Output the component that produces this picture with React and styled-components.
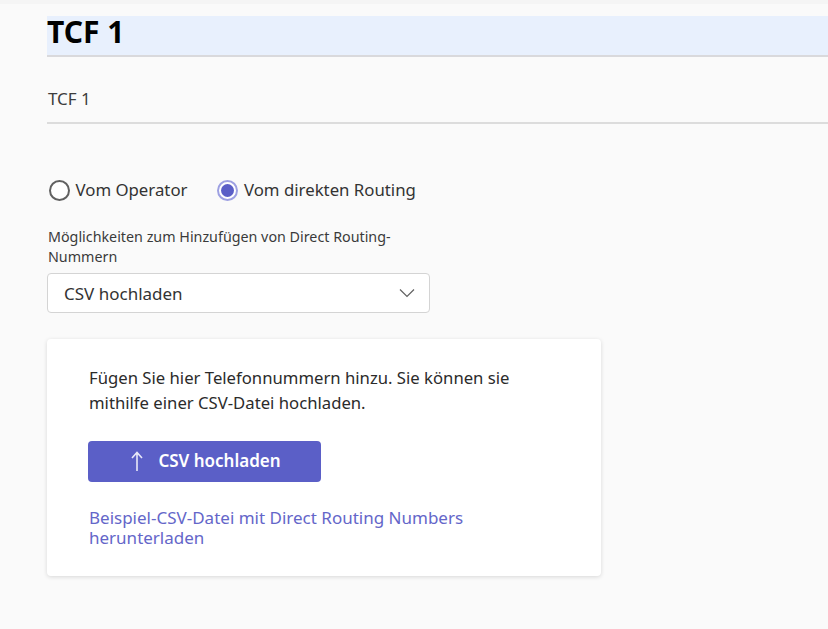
import React from "react";
import styled, { createGlobalStyle } from "styled-components";

const Global = createGlobalStyle`
  html, body { margin: 0; padding: 0; background: #fafafa; }
  body { font-family: "Noto Sans", "Open Sans", sans-serif; color: #242424; }
`;

const Page = styled.div`
  width: 828px;
  height: 629px;
  overflow: hidden;
  box-sizing: border-box;
  border-top: 4px solid #f5f5f5;
  padding: 12px 0 0 47px;
  display: flex;
  flex-direction: column;
`;

const TitleField = styled.div`
  height: 39px;
  background: #e8f0fd;
  border-bottom: 2px solid #d9d9dc;
  display: flex;
  align-items: center;
  flex: none;
`;

const Title = styled.h1`
  margin: 0 0 8px 0;
  font-size: 30px;
  line-height: 32px;
  font-weight: 700;
  color: #000;
`;

const NameField = styled.div`
  height: 67px;
  margin-bottom: 54px;
  border-bottom: 2px solid #dcdcdc;
  box-sizing: border-box;
  padding: 31px 0 0 1px;
  font-size: 17px;
  line-height: 22px;
  color: #3d3d3d;
  flex: none;
`;

const RadioGroup = styled.div`
  display: flex;
  align-items: center;
  gap: 30px;
  margin: 0 0 25px 2px;
  height: 24px;
  flex: none;
`;

const RadioOption = styled.label`
  display: flex;
  align-items: center;
  gap: 5.5px;
  font-size: 16.8px;
  line-height: 24px;
  color: #333;
`;

const RadioMark = styled.span`
  width: 21px;
  height: 21px;
  box-sizing: border-box;
  border-radius: 50%;
  border: 2px solid ${(p) => (p.$checked ? "#9da0e2" : "#616161")};
  display: flex;
  align-items: center;
  justify-content: center;
  background: #fff;
  &::after {
    content: "";
    width: 13px;
    height: 13px;
    border-radius: 50%;
    background: ${(p) => (p.$checked ? "#5b5fc7" : "transparent")};
  }
`;

const FieldLabel = styled.div`
  width: 384px;
  margin-left: 1px;
  font-size: 14.3px;
  line-height: 20px;
  color: #3a3a3a;
`;

const Select = styled.div`
  width: 383px;
  height: 40px;
  margin-top: 6px;
  box-sizing: border-box;
  background: #fff;
  border: 1px solid #d4d4d4;
  border-radius: 4px;
  padding: 0 14px 0 16px;
  display: flex;
  align-items: center;
  justify-content: space-between;
  font-size: 17px;
  color: #333;
  flex: none;
`;

const Card = styled.section`
  width: 554px;
  height: 237px;
  margin-top: 26px;
  box-sizing: border-box;
  background: #fff;
  border-radius: 4px;
  box-shadow: 0 1px 4px rgba(0, 0, 0, 0.14);
  padding: 26px 41px 0;
  display: flex;
  flex-direction: column;
  align-items: flex-start;
  flex: none;
`;

const CardText = styled.p`
  margin: 0 0 26px 1px;
  font-size: 16.7px;
  line-height: 25px;
  color: #2b2b2b;
  white-space: nowrap;
`;

const UploadButton = styled.button`
  width: 233px;
  height: 41px;
  border: none;
  border-radius: 4px;
  background: #5b5fc7;
  color: #fff;
  font: 600 17px "Noto Sans", sans-serif;
  display: flex;
  align-items: center;
  justify-content: center;
  gap: 15px;
  padding: 0 0 2px 3px;
`;

const DownloadLink = styled.a`
  margin: 26px 0 0 1px;
  font-size: 17px;
  line-height: 20px;
  color: #6466c9;
  text-decoration: none;
  white-space: nowrap;
`;

export default function App() {
  return (
    <Page>
      <Global />
      <TitleField>
        <Title>TCF 1</Title>
      </TitleField>
      <NameField>TCF 1</NameField>
      <RadioGroup>
        <RadioOption>
          <RadioMark />
          Vom Operator
        </RadioOption>
        <RadioOption>
          <RadioMark $checked />
          Vom direkten Routing
        </RadioOption>
      </RadioGroup>
      <FieldLabel>
        Möglichkeiten zum Hinzufügen von Direct Routing-
        <br />
        Nummern
      </FieldLabel>
      <Select>
        CSV hochladen
        <svg width="16" height="10" viewBox="0 0 16 10" fill="none">
          <path d="M1 1.5L8 8.5L15 1.5" stroke="#616161" strokeWidth="1.2" />
        </svg>
      </Select>
      <Card>
        <CardText>
          Fügen Sie hier Telefonnummern hinzu. Sie können sie
          <br />
          mithilfe einer CSV-Datei hochladen.
        </CardText>
        <UploadButton>
          <svg width="12" height="20" viewBox="0 0 12 20" fill="none">
            <path d="M6 20V1.5M1 7L6 1.5L11 7" stroke="#e8e8f8" strokeWidth="1.6" />
          </svg>
          CSV hochladen
        </UploadButton>
        <DownloadLink>
          Beispiel-CSV-Datei mit Direct Routing Numbers
          <br />
          herunterladen
        </DownloadLink>
      </Card>
    </Page>
  );
}
